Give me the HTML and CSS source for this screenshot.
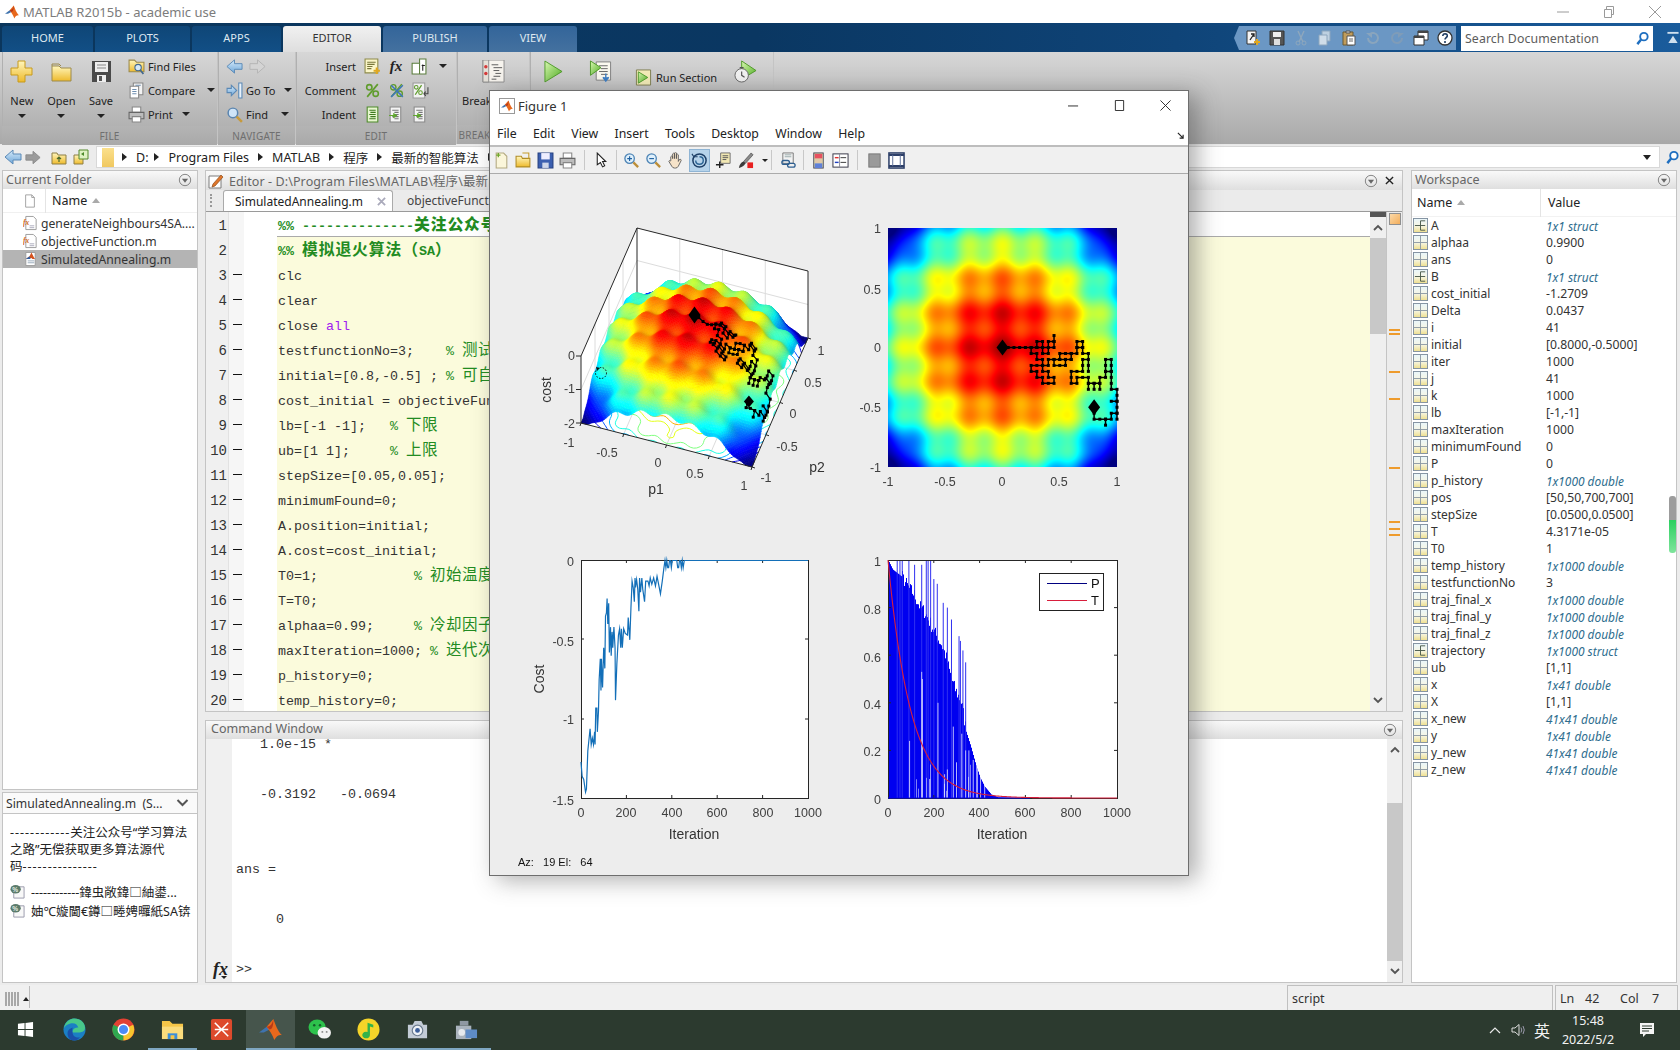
FILE: index.html
```html
<!DOCTYPE html>
<html lang="en">
<head>
<meta charset="utf-8">
<title>MATLAB R2015b - academic use</title>
<link rel="stylesheet" href="styles.css">
</head>
<body>
<svg class="defs" width="0" height="0" aria-hidden="true">
  <defs>
    <linearGradient id="gy" x1="0" y1="0" x2="0" y2="1"><stop offset="0" stop-color="#fff6bc"/><stop offset="1" stop-color="#eeba2c"/></linearGradient>
    <linearGradient id="gb" x1="0" y1="0" x2="0" y2="1"><stop offset="0" stop-color="#d8ecfb"/><stop offset="1" stop-color="#6ea6d8"/></linearGradient>
    <linearGradient id="gg" x1="0" y1="0" x2="1" y2="1"><stop offset="0" stop-color="#d8f7b0"/><stop offset="1" stop-color="#4fae22"/></linearGradient>
    <linearGradient id="gw" x1="0" y1="0" x2="0" y2="1"><stop offset="0" stop-color="#e9f6fb"/><stop offset=".5" stop-color="#f6f6e6"/><stop offset="1" stop-color="#efdf8c"/></linearGradient>
    <symbol id="s-mlogo" viewBox="0 0 24 24"><path fill="#3f73ae" d="M0 15 8 9l3 3-6 3z"/><path fill="#e8681c" d="M8 9 15 1c2 5 4 12 9 17-3-1-6 1-8 5-2-6-5-10-8-14z"/><path fill="#b93a18" d="M15 1c-1 5-3 8-7 8l3 3c3 0 4-4 4-11z"/></symbol>
    <symbol id="s-page" viewBox="0 0 16 16"><path d="M3 1h7l3 3v11H3z" fill="#fff" stroke="#9a9a9a"/><path d="M10 1v3h3" fill="none" stroke="#9a9a9a"/></symbol>
    <symbol id="s-lineg" viewBox="0 0 16 16"><path d="M3 1h10v14H3z" fill="#e7f6cf" stroke="#4e8c2b"/><path d="M5 4h6M6 6h5M5 8h6M6 10h5M5 12h6" stroke="#3d7a1e"/></symbol>
    <symbol id="s-findf" viewBox="0 0 16 16"><path d="M1 2h5l2 2h7v9H1z" fill="url(#gy)" stroke="#9c8a4c"/><circle cx="9.500" cy="9" r="3" fill="#d6e9f8" stroke="#41688f"/><path d="M11.600 11.200 14.500 15" stroke="#41688f" stroke-width="1.600"/></symbol>
    <symbol id="s-compare" viewBox="0 0 16 16"><path d="M5 1h9v11H5z" fill="#f3f3f3" stroke="#888"/><path d="M2 4h8v11H2z" fill="#fff" stroke="#888"/><path d="M4 7h4M4 9h4M4 11h4M7 3h5" stroke="#6f8fb0"/></symbol>
    <symbol id="s-print" viewBox="0 0 16 16"><path d="M4 1h8v5H4z" fill="#fff" stroke="#888"/><path d="M1 6h14v6H1z" fill="#bcbcbc" stroke="#666"/><path d="M4 10h8v5H4z" fill="#fff" stroke="#888"/></symbol>
    <symbol id="s-back" viewBox="0 0 18 16"><path d="M1 8 9 1v4h8v6H9v4z" fill="url(#gb)" stroke="#5a89b6"/></symbol>
    <symbol id="s-fwd" viewBox="0 0 18 16"><path d="M17 8 9 1v4H1v6h8v4z" fill="#d4d4d4" stroke="#b4b4b4"/></symbol>
    <symbol id="s-fwdg" viewBox="0 0 18 16"><path d="M17 8 9 1v4H1v6h8v4z" fill="#9b9b9b" stroke="#8a8a8a"/></symbol>
    <symbol id="s-goto" viewBox="0 0 16 16"><path d="M10 8 5 3v3H1v4h4v3z" fill="url(#gb)" stroke="#5a89b6"/><path d="M12 1h3v14h-3z" fill="#e8f2fb" stroke="#5a89b6"/></symbol>
    <symbol id="s-mag" viewBox="0 0 16 16"><circle cx="6.500" cy="6.500" r="4.500" fill="#cfe4f7" stroke="#5a85b0" stroke-width="1.400"/><path d="M10 10 15 15" stroke="#c79a3c" stroke-width="2.400"/></symbol>
    <symbol id="s-blue-mag" viewBox="0 0 16 16"><circle cx="9.500" cy="6" r="4" fill="#fff" stroke="#1f6fc0" stroke-width="2"/><path d="M6.500 9 2.500 14" stroke="#1f6fc0" stroke-width="2.600"/></symbol>
    <symbol id="s-insert" viewBox="0 0 16 16"><path d="M1 1h12v13H1z" fill="#fbf6c8" stroke="#8d8a4a"/><path d="M3 4h8M3 6h7M3 8h5M3 10h4" stroke="#77763a"/><path d="M12 9v6M9 12h6" stroke="#e0a820" stroke-width="2"/></symbol>
    <symbol id="s-func" viewBox="0 0 16 16"><path d="M2 5h7V1h6v14H2z" fill="#fff" stroke="#5a7d3c"/><path d="M9 5v10" stroke="#5a7d3c"/><path d="M11 7h3M12 6v6" stroke="#222"/></symbol>
    <symbol id="s-pct" viewBox="0 0 16 16"><path d="M13 2 3 14" stroke="#5f9c2c" stroke-width="1.600"/><circle cx="5" cy="5" r="2.500" fill="none" stroke="#5f9c2c" stroke-width="1.500"/><circle cx="11" cy="11" r="2.500" fill="none" stroke="#5f9c2c" stroke-width="1.500"/></symbol>
    <symbol id="s-pctx" viewBox="0 0 16 16"><path d="M13 2 3 14" stroke="#5f9c2c" stroke-width="1.400"/><circle cx="5" cy="5" r="2.500" fill="none" stroke="#5f9c2c" stroke-width="1.300"/><circle cx="11" cy="11" r="2.500" fill="none" stroke="#5f9c2c" stroke-width="1.300"/><path d="M3 3 14 14M14 3 3 14" stroke="#3d77b8" stroke-width="1.400"/></symbol>
    <symbol id="s-pctw" viewBox="0 0 16 16"><path d="M1 1h11v14H1z" fill="#f2f2f2" stroke="#9a9a9a"/><path d="M9 3 3 12" stroke="#5f9c2c" stroke-width="1.200"/><circle cx="4" cy="5" r="1.700" fill="none" stroke="#5f9c2c"/><circle cx="8" cy="10" r="1.700" fill="none" stroke="#5f9c2c"/><path d="M15 5v6h-4M11 11l2-2M11 11l2 2" fill="none" stroke="#444"/></symbol>
    <symbol id="s-indl" viewBox="0 0 16 16"><path d="M2 1h10v14H2z" fill="#f4f4f4" stroke="#8a8a8a"/><path d="M4 4h6M6 6h4M6 8h4M4 10h6M6 12h4" stroke="#777"/><path d="M1 9h6M5 7l3 2-3 2" fill="#5fa82c" stroke="#5fa82c"/></symbol>
    <symbol id="s-break" viewBox="0 0 24 24"><path d="M1 0h22v23H1z" fill="#f7f4ee" stroke="#8d8d8d"/><path d="M1 0h6v23H1z" fill="#e4e0d8" stroke="#8d8d8d"/><circle cx="4" cy="7" r="1.800" fill="#d43a3a"/><circle cx="4" cy="14" r="1.800" fill="#d43a3a"/><path d="M10 5h7M12 8h9M12 11h6M14 14h6M12 17h7M10 20h5" stroke="#5a5a5a"/></symbol>
    <symbol id="s-run" viewBox="0 0 20 24"><path d="M1 1 19 12 1 23z" fill="url(#gg)" stroke="#4f9a2a"/></symbol>
    <symbol id="s-radv" viewBox="0 0 24 24"><path d="M7 2h15v19H7z" fill="#fbf9ef" stroke="#808080"/><path d="M10 6h9M12 9h7M10 12h9M12 15h7" stroke="#666"/><path d="M1 1 12 8 1 16z" fill="url(#gg)" stroke="#4f9a2a"/><path d="M17 14v6M14 18l3 4 3-4" fill="#3d7ec4" stroke="#3d7ec4" stroke-width="1.400"/></symbol>
    <symbol id="s-rsec" viewBox="0 0 17 18"><path d="M1 1h15v16H1z" fill="#f4ecb8" stroke="#7d7d50"/><path d="M3 3 13 9 3 15z" fill="url(#gg)" stroke="#4f9a2a"/></symbol>
    <symbol id="s-timer" viewBox="0 0 24 24"><path d="M8 1 23 11 8 20z" fill="url(#gg)" stroke="#4f9a2a"/><circle cx="8" cy="16" r="7" fill="#f2f2f2" stroke="#666"/><path d="M8 12v4l3 2M6 8h4" fill="none" stroke="#555" stroke-width="1.200"/></symbol>
    <symbol id="s-edit" viewBox="0 0 16 16"><path d="M1 3h12v12H1z" fill="#fff" stroke="#7c7c7c"/><path d="M5 11 13 2l2 2-8 9-3 1z" fill="#e0762c" stroke="#8d4d18" stroke-width=".7"/></symbol>
    <symbol id="s-fx" viewBox="0 0 16 16"><path d="M3 1h8l3 3v11H3z" fill="#fff" stroke="#9a9a9a"/><text x="0" y="10" class="fxglyph">fx</text><path d="M7 11h5M7 13h5" stroke="#aab"/></symbol>
    <symbol id="s-scr" viewBox="0 0 16 16"><path d="M3 1h10v14H3z" fill="#fff" stroke="#9a9a9a"/><path d="M3 8 7 5l2-4 3 6 1 1-3 0-1-1z" fill="#d4521e"/><path d="M3 8 7 5l1 3z" fill="#2f5ea0"/><path d="M5 10h7M5 12h7" stroke="#9ab"/></symbol>
    <symbol id="s-grid" viewBox="0 0 16 16"><rect x=".5" y=".5" width="15" height="15" fill="url(#gw)" stroke="#7f8f9f"/><path d="M0 8h16M8 0v16" stroke="#8d9aa4"/></symbol>
    <symbol id="s-struct" viewBox="0 0 16 16"><rect x=".5" y=".5" width="15" height="15" fill="url(#gw)" stroke="#7f8f9f"/><path d="M8 3v10M8 3h5M8 8h5M8 13h5M2 8h6" fill="none" stroke="#4a5a4a"/></symbol>
    <symbol id="s-detail" viewBox="0 0 16 16"><path d="M4 3h11v12H4z" fill="#f8f8f8" stroke="#99a"/><ellipse cx="6" cy="5.500" rx="5.500" ry="4.500" fill="#5b7b6b"/><text x="2.400" y="8" class="pctglyph">%</text></symbol>
    <symbol id="s-up" viewBox="0 0 16 16"><path d="M1 4h5l1 2h8v9H1z" fill="url(#gy)" stroke="#8e7f45"/><path d="M8 13V8M6 10l2-2 2 2" fill="none" stroke="#4b6a2a" stroke-width="1.200"/></symbol>
    <symbol id="s-browse" viewBox="0 0 16 16"><path d="M1 6h9v9H1z" fill="url(#gy)" stroke="#8e7f45"/><path d="M6 1h9v9H6z" fill="#dff2c4" stroke="#548a2c"/><path d="M8 5l3-2v4z" fill="#4b8a2a"/></symbol>
    <symbol id="s-open" viewBox="0 0 16 16"><path d="M1 4h5l1 2h7v8H1z" fill="url(#gy)" stroke="#b08c26"/><path d="M7 1h6v5" fill="none" stroke="#c49b2c"/></symbol>
    <symbol id="s-disk" viewBox="0 0 16 16"><path d="M1 1h14v14H1z" fill="#3b5fb0" stroke="#223f80"/><path d="M4 1h8v6H4z" fill="#eef"/><path d="M5 10h6v5H5z" fill="#cdd6ea"/></symbol>
    <symbol id="s-arrowc" viewBox="0 0 12 16"><path d="M2 1v11l3-2 2 4 2-1-2-4h3z" fill="#fff" stroke="#222"/></symbol>
    <symbol id="s-zin" viewBox="0 0 18 18"><circle cx="7" cy="7" r="5" fill="#dff0fc" stroke="#4d84b5" stroke-width="1.400"/><path d="M4.500 7h5M7 4.500v5" stroke="#1d5fa0" stroke-width="1.200"/><path d="M11 11l5 5" stroke="#bc8e38" stroke-width="2.400"/></symbol>
    <symbol id="s-zout" viewBox="0 0 18 18"><circle cx="7" cy="7" r="5" fill="#dff0fc" stroke="#4d84b5" stroke-width="1.400"/><path d="M4.500 7h5" stroke="#1d5fa0" stroke-width="1.200"/><path d="M11 11l5 5" stroke="#bc8e38" stroke-width="2.400"/></symbol>
    <symbol id="s-pan" viewBox="0 0 18 18"><path d="M4 9V5q1-1.500 2 0v2-5q1-1.500 2 0v5-6q1-1.500 2 0v6-4q1-1.500 2 0v7l1-2q2-1 2 1l-3 6q-1 2-3 2H8q-2 0-3-2l-3-5q0-1.500 2-.5z" fill="#f6e3c9" stroke="#555" stroke-width=".9"/></symbol>
    <symbol id="s-rot" viewBox="0 0 18 18"><circle cx="9" cy="9" r="7" fill="none" stroke="#1d3f66" stroke-width="1.600"/><path d="M3 5l-2-3M3 5l4 0" stroke="#1d3f66" stroke-width="1.200"/><path d="M9 5q4 0 4 4t-4 4-4-4" fill="none" stroke="#2e6696" stroke-width="1.500"/></symbol>
    <symbol id="s-cursor" viewBox="0 0 18 18"><path d="M6 1h10v11H6z" fill="#f3e9b4" stroke="#6d6d6d"/><path d="M8 4h6M8 6h6M8 8h4" stroke="#555"/><path d="M5 10v7M1 13.500h8" stroke="#222" stroke-width="1.500"/></symbol>
    <symbol id="s-brush" viewBox="0 0 18 18"><path d="M15 1 7 10l2 2 8-9z" fill="#8b8b8b" stroke="#444" stroke-width=".7"/><path d="M7 10q-4 1-5 7 5-1 7-5z" fill="#3b3b3b"/><rect x="11" y="11" width="6" height="6" fill="#e82020"/></symbol>
    <symbol id="s-link" viewBox="0 0 18 18"><path d="M3 1h11v11H3z" fill="#f3f3f3" stroke="#777"/><path d="M5 3h7M5 5h7" stroke="#9aa"/><rect x="2" y="9" width="8" height="4" rx="2" fill="none" stroke="#2e5f90" stroke-width="1.400"/><rect x="8" y="12" width="8" height="4" rx="2" fill="none" stroke="#2e5f90" stroke-width="1.400"/></symbol>
    <symbol id="s-cbar" viewBox="0 0 12 18"><rect x="1" y="1" width="10" height="16" fill="#dda" stroke="#445"/><rect x="2" y="2" width="8" height="5" fill="#e85060"/><rect x="2" y="7" width="8" height="5" fill="#e0c8a8"/><rect x="2" y="12" width="8" height="5" fill="#6080d8"/></symbol>
    <symbol id="s-legend" viewBox="0 0 18 18"><rect x="1" y="2" width="16" height="14" fill="#fff" stroke="#334"/><path d="M3 6h4" stroke="#e03030" stroke-width="1.500"/><path d="M3 11h4" stroke="#2040c0" stroke-width="1.500"/><path d="M9 6h6M9 11h6" stroke="#333"/><path d="M8 2v14" stroke="#889"/></symbol>
    <symbol id="s-hide" viewBox="0 0 14 18"><rect x="1" y="2" width="12" height="14" fill="#9a9a9a" stroke="#777"/></symbol>
    <symbol id="s-tools" viewBox="0 0 18 18"><rect x="1" y="1" width="16" height="16" fill="#fff" stroke="#2d3f68" stroke-width="1.600"/><path d="M1 3h16M1 15h16" stroke="#2d3f68" stroke-width="2.500"/><path d="M5 3v12M13 3v12" stroke="#5d6f98"/></symbol>
    <symbol id="s-tb-new" viewBox="0 0 16 16"><path d="M3 1h7l3 3v11H3z" fill="#fbf6da" stroke="#b3a980"/><path d="M5 1v4M3 3h4" stroke="#6da52b" stroke-width="1.200"/></symbol>
    <symbol id="s-tb-save" viewBox="0 0 16 16"><path d="M1 1h14v14H1z" fill="#555" stroke="#333"/><path d="M4 2h8v5H4z" fill="#eee"/><path d="M5 9h6v6H5z" fill="#ddd"/></symbol>
    <symbol id="s-cut" viewBox="0 0 16 16"><path d="M11 1 6 12M5 1l5 11" stroke="#8ea7bd" stroke-width="1.400"/><circle cx="5" cy="13" r="2" fill="none" stroke="#8ea7bd"/><circle cx="11" cy="13" r="2" fill="none" stroke="#8ea7bd"/></symbol>
    <symbol id="s-copy" viewBox="0 0 16 16"><path d="M5 1h8v10H5z" fill="#bdd0e0" stroke="#8da6bd"/><path d="M2 5h8v10H2z" fill="#cfdde9" stroke="#8da6bd"/></symbol>
    <symbol id="s-paste" viewBox="0 0 16 16"><path d="M2 2h10v13H2z" fill="#c09c5c" stroke="#6d5a30"/><path d="M6 6h8v9H6z" fill="#fff" stroke="#555"/><path d="M5 1h4v2H5z" fill="#ddd" stroke="#555"/><path d="M8 9h4M8 11h4" stroke="#666"/></symbol>
    <symbol id="s-undo" viewBox="0 0 16 16"><path d="M3 8a5 5 0 1 0 2-4" fill="none" stroke="#8aa5bd" stroke-width="2"/><path d="M1 3h6v5z" fill="#8aa5bd"/></symbol>
    <symbol id="s-redo" viewBox="0 0 16 16"><path d="M13 8a5 5 0 1 1-2-4" fill="none" stroke="#7f9cb8" stroke-width="2"/><path d="M15 3H9v5z" fill="#7f9cb8"/></symbol>
    <symbol id="s-wins" viewBox="0 0 16 16"><path d="M5 1h10v9H5z" fill="#fff" stroke="#333"/><path d="M5 1h10v2H5z" fill="#444"/><path d="M1 6h10v9H1z" fill="#fff" stroke="#333"/><path d="M1 6h10v2H1z" fill="#444"/></symbol>
    <symbol id="s-help" viewBox="0 0 16 16"><circle cx="8" cy="8" r="7" fill="#fff" stroke="#333" stroke-width="1.300"/><path d="M5.800 6q.2-2.200 2.300-2.200 2.300.1 2.200 2.100c-.1 1.700-2.300 1.700-2.300 3.500M8 11v2" fill="none" stroke="#1f3d63" stroke-width="1.600"/></symbol>
    <symbol id="s-short" viewBox="0 0 16 16"><path d="M2 1h9v13H2z" fill="#f4f4f4" stroke="#333"/><path d="M5 10 9 4M6 4h3v3" fill="none" stroke="#222" stroke-width="1.300"/><path d="M12 9v6M9 12h6" stroke="#e0a820" stroke-width="2"/></symbol>
    <symbol id="s-dropc" viewBox="0 0 16 16"><circle cx="8" cy="8" r="6.500" fill="none" stroke="#777"/><path d="M4.500 6.500h7L8 11z" fill="#666"/></symbol>
  </defs>
</svg>

<div class="app">
  <header class="titlebar">
    <svg class="ic-title"><use href="#s-mlogo"/></svg>
    <span class="title-text">MATLAB R2015b - academic use</span>
    <div class="winctl">
      <svg class="wc" viewBox="0 0 12 12"><path d="M0 6h12" stroke="#9a9a9a"/></svg>
      <svg class="wc" viewBox="0 0 12 12"><path d="M1.500 3.500h7v8h-7zM3.500 3.500v-3h7v8h-2" fill="none" stroke="#9a9a9a"/></svg>
      <svg class="wc" viewBox="0 0 12 12"><path d="M0 0l12 12M12 0 0 12" stroke="#9a9a9a"/></svg>
    </div>
  </header>

  <nav class="tabstrip">
    <span class="tab t-dark t-home">HOME</span>
    <span class="tab t-dark t-plots">PLOTS</span>
    <span class="tab t-dark t-apps">APPS</span>
    <span class="tab t-active t-editor">EDITOR</span>
    <span class="tab t-light t-publish">PUBLISH</span>
    <span class="tab t-light t-view">VIEW</span>
    <div class="quick">
      <svg class="qi"><use href="#s-short"/></svg>
      <svg class="qi"><use href="#s-tb-save"/></svg>
      <svg class="qi"><use href="#s-cut"/></svg>
      <svg class="qi"><use href="#s-copy"/></svg>
      <svg class="qi"><use href="#s-paste"/></svg>
      <svg class="qi"><use href="#s-undo"/></svg>
      <svg class="qi"><use href="#s-redo"/></svg>
      <svg class="qi"><use href="#s-wins"/></svg>
      <svg class="qi"><use href="#s-help"/></svg>
    </div>
    <div class="docsearch">
      <span>Search Documentation</span>
      <svg class="ds-ic"><use href="#s-blue-mag"/></svg>
    </div>
    <svg class="collapse" viewBox="0 0 12 14"><path d="M0 1h12v2H0z" fill="#cfe0ee"/><path d="M6 5l5 8H1z" fill="#cfe0ee"/></svg>
  </nav>

  <section class="ribbon">
    <div class="rsec r-file">
      <div class="rbody">
        <div class="bigbtn">
          <svg class="big" viewBox="0 0 23 23"><path d="M8 1h7v7h7v7h-7v7H8v-7H1V8h7z" fill="url(#gy)" stroke="#c79a1c"/></svg>
          <span>New</span><i class="caret"></i>
        </div>
        <div class="bigbtn">
          <svg class="big" viewBox="0 0 23 23"><path d="M2 6h7l2 2h10v13H2z" fill="url(#gy)" stroke="#9c8a4c"/><path d="M2 6V4h7l2 2" fill="none" stroke="#9c8a4c"/></svg>
          <span>Open</span><i class="caret"></i>
        </div>
        <div class="bigbtn">
          <svg class="big" viewBox="0 0 23 23"><path d="M2 1h19v21H2z" fill="#4a4a4a"/><path d="M5 2h13v10H5z" fill="#eee"/><path d="M7 5h9M7 8h9" stroke="#888"/><path d="M7 15h9v7H7z" fill="#eee"/><path d="M9 16h3v5H9z" fill="#555"/></svg>
          <span>Save</span><i class="caret"></i>
        </div>
        <div class="smallcol">
          <div class="srow"><svg class="sic"><use href="#s-findf"/></svg><span>Find Files</span></div>
          <div class="srow"><svg class="sic"><use href="#s-compare"/></svg><span>Compare</span><i class="caret sc-cmp"></i></div>
          <div class="srow"><svg class="sic"><use href="#s-print"/></svg><span>Print</span><i class="caret sc-prn"></i></div>
        </div>
      </div>
      <div class="rlabel">FILE</div>
    </div>
    <div class="rsec r-nav">
      <div class="rbody">
        <div class="smallcol">
          <div class="srow"><svg class="sic"><use href="#s-back"/></svg><svg class="sic sic2"><use href="#s-fwd"/></svg></div>
          <div class="srow"><svg class="sic"><use href="#s-goto"/></svg><span>Go To</span><i class="caret sc2"></i></div>
          <div class="srow"><svg class="sic"><use href="#s-mag"/></svg><span>Find</span><i class="caret sc-find"></i></div>
        </div>
      </div>
      <div class="rlabel">NAVIGATE</div>
    </div>
    <div class="rsec r-edit">
      <div class="rbody">
        <div class="smallcol">
          <div class="srow erow"><span class="elabel">Insert</span><svg class="sic"><use href="#s-insert"/></svg><b class="fxbtn">fx</b><svg class="sic"><use href="#s-func"/></svg><i class="caret sc3"></i></div>
          <div class="srow erow"><span class="elabel">Comment</span><svg class="sic"><use href="#s-pct"/></svg><svg class="sic ei"><use href="#s-pctx"/></svg><svg class="sic ei"><use href="#s-pctw"/></svg></div>
          <div class="srow erow"><span class="elabel">Indent</span><svg class="sic"><use href="#s-lineg"/></svg><svg class="sic ei"><use href="#s-indl"/></svg><svg class="sic ei"><use href="#s-indl"/></svg></div>
        </div>
      </div>
      <div class="rlabel">EDIT</div>
    </div>
    <div class="rsec r-break">
      <div class="rbody">
        <div class="bigbtn wide"><svg class="big"><use href="#s-break"/></svg><span>Breakpoints</span><i class="caret"></i></div>
      </div>
      <div class="rlabel">BREAKPOINTS</div>
    </div>
    <div class="rsec r-run">
      <div class="rbody runrow">
        <svg class="big ru1"><use href="#s-run"/></svg>
        <svg class="big ru2"><use href="#s-radv"/></svg>
        <div class="rsecbtn"><svg class="sic"><use href="#s-rsec"/></svg><span>Run Section</span></div>
        <svg class="big ru3"><use href="#s-timer"/></svg>
      </div>
      <div class="rlabel">RUN</div>
    </div>
  </section>

  <div class="pathbar">
    <svg class="p1"><use href="#s-back"/></svg>
    <svg class="p2"><use href="#s-fwdg"/></svg>
    <svg class="p3"><use href="#s-up"/></svg>
    <svg class="p4"><use href="#s-browse"/></svg>
    <div class="pathbox">
      <i class="folderchip"></i>
      <span class="crumbs">
        <i class="tri"></i><span>D:</span><i class="tri"></i><span>Program Files</span><i class="tri"></i><span>MATLAB</span><i class="tri"></i><span>程序</span><i class="tri"></i><span>最新的智能算法</span><i class="tri"></i>
      </span>
      <i class="pdown"></i>
    </div>
    <svg class="p5"><use href="#s-blue-mag"/></svg>
  </div>

  <main class="main">
    <div class="leftcol">
      <section class="panel folder">
        <div class="phead"><span>Current Folder</span><svg class="dropc"><use href="#s-dropc"/></svg></div>
        <div class="fhead"><svg class="fh-ic"><use href="#s-page"/></svg><span class="fh-name">Name</span><i class="sortup"></i></div>
        <div class="frow"><svg class="fic"><use href="#s-fx"/></svg><span>generateNeighbours4SA....</span></div>
        <div class="frow"><svg class="fic"><use href="#s-fx"/></svg><span>objectiveFunction.m</span></div>
        <div class="frow sel"><svg class="fic"><use href="#s-scr"/></svg><span>SimulatedAnnealing.m</span></div>
      </section>
      <section class="panel details">
        <div class="dhead"><span>SimulatedAnnealing.m &nbsp;(S...</span><svg class="chev" viewBox="0 0 12 8"><path d="M1 1l5 5 5-5" fill="none" stroke="#555" stroke-width="2"/></svg></div>
        <p class="dtext"><span class="dd">------------</span>关注公众号“学习算法<br>之路”无偿获取更多算法源代<br>码<span class="dd">---------------</span></p>
        <div class="ditem"><svg class="dic"><use href="#s-detail"/></svg><span>------------鍏虫敞鍏□紬鍙...</span></div>
        <div class="ditem"><svg class="dic"><use href="#s-detail"/></svg><span>妯℃嫙閫€鐏□畻娉曪紙SA锛</span></div>
      </section>
    </div>

    <div class="centercol">
      <section class="panel editor">
        <div class="phead ehead">
          <svg class="eic"><use href="#s-edit"/></svg>
          <span>Editor - D:\Program Files\MATLAB\程序\最新的智能算法\SimulatedAnnealing.m</span>
          <svg class="dropc eright"><use href="#s-dropc"/></svg>
          <svg class="xic" viewBox="0 0 10 10"><path d="M1 1l8 8M9 1 1 9" stroke="#222" stroke-width="1.500"/></svg>
        </div>
        <div class="etabs">
          <i class="grip"></i>
          <span class="etab on">SimulatedAnnealing.m<svg class="tabx" viewBox="0 0 10 10"><path d="M1 1l8 8M9 1 1 9" stroke="#aab" stroke-width="2"/></svg></span>
          <span class="etab">objectiveFunction.m</span>
        </div>
        <div class="ebody">
          <div class="lines">
            <div class="line first"><span class="ln">1</span><span class="dc"></span><span class="gp"></span><span class="code cell"><b>%% --------------<span class="cj">关注公众号“学习算法之路”无偿获取更多算法源代码</span>---------------</b></span></div>
            <div class="line"><span class="ln">2</span><span class="dc"></span><span class="gp"></span><span class="code"><b class="cell">%% <span class="cj">模拟退火算法（</span>SA<span class="cj">）</span></b></span></div>
            <div class="line"><span class="ln">3</span><span class="dc"><i></i></span><span class="gp"></span><span class="code">clc</span></div>
            <div class="line"><span class="ln">4</span><span class="dc"><i></i></span><span class="gp"></span><span class="code">clear</span></div>
            <div class="line"><span class="ln">5</span><span class="dc"><i></i></span><span class="gp"></span><span class="code">close <span class="kw">all</span></span></div>
            <div class="line"><span class="ln">6</span><span class="dc"><i></i></span><span class="gp"></span><span class="code">testfunctionNo=3;    <span class="cm">% <span class="cj">测试函数编号</span></span></span></div>
            <div class="line"><span class="ln">7</span><span class="dc"><i></i></span><span class="gp"></span><span class="code">initial=[0.8,-0.5] ; <span class="cm">% <span class="cj">可自定义初始位置</span></span></span></div>
            <div class="line"><span class="ln">8</span><span class="dc"><i></i></span><span class="gp"></span><span class="code">cost_initial = objectiveFunction(initial,testfunctionNo);</span></div>
            <div class="line"><span class="ln">9</span><span class="dc"><i></i></span><span class="gp"></span><span class="code">lb=[-1 -1];   <span class="cm">% <span class="cj">下限</span></span></span></div>
            <div class="line"><span class="ln">10</span><span class="dc"><i></i></span><span class="gp"></span><span class="code">ub=[1 1];     <span class="cm">% <span class="cj">上限</span></span></span></div>
            <div class="line"><span class="ln">11</span><span class="dc"><i></i></span><span class="gp"></span><span class="code">stepSize=[0.05,0.05];</span></div>
            <div class="line"><span class="ln">12</span><span class="dc"><i></i></span><span class="gp"></span><span class="code">minimumFound=0;</span></div>
            <div class="line"><span class="ln">13</span><span class="dc"><i></i></span><span class="gp"></span><span class="code">A.position=initial;</span></div>
            <div class="line"><span class="ln">14</span><span class="dc"><i></i></span><span class="gp"></span><span class="code">A.cost=cost_initial;</span></div>
            <div class="line"><span class="ln">15</span><span class="dc"><i></i></span><span class="gp"></span><span class="code">T0=1;            <span class="cm">% <span class="cj">初始温度</span></span></span></div>
            <div class="line"><span class="ln">16</span><span class="dc"><i></i></span><span class="gp"></span><span class="code">T=T0;</span></div>
            <div class="line"><span class="ln">17</span><span class="dc"><i></i></span><span class="gp"></span><span class="code">alphaa=0.99;     <span class="cm">% <span class="cj">冷却因子</span></span></span></div>
            <div class="line"><span class="ln">18</span><span class="dc"><i></i></span><span class="gp"></span><span class="code">maxIteration=1000; <span class="cm">% <span class="cj">迭代次数</span></span></span></div>
            <div class="line"><span class="ln">19</span><span class="dc"><i></i></span><span class="gp"></span><span class="code">p_history=0;</span></div>
            <div class="line"><span class="ln">20</span><span class="dc"><i></i></span><span class="gp"></span><span class="code">temp_history=0;</span></div>
          </div>
          <div class="vscroll es">
            <i class="es-top"></i>
            <svg class="chevs" viewBox="0 0 10 7"><path d="M1 6l4-4 4 4" fill="none" stroke="#555" stroke-width="1.800"/></svg>
            <i class="thumb"></i>
            <svg class="chevs botm" viewBox="0 0 10 7"><path d="M1 1l4 4 4-4" fill="none" stroke="#555" stroke-width="1.800"/></svg>
          </div>
          <div class="markstrip">
            <i class="okbox"></i>
            <i class="mk m1"></i><i class="mk m2"></i><i class="mk m3"></i><i class="mk m4"></i><i class="mk m5"></i><i class="mk m6"></i><i class="mk m7"></i><i class="mk m8"></i>
          </div>
        </div>
      </section>
      <section class="panel cmd">
        <div class="phead chead"><span>Command Window</span><svg class="dropc"><use href="#s-dropc"/></svg></div>
        <div class="cbody">
          <div class="cgut"><span class="fxprompt">fx</span><i class="fxcaret"></i></div>
          <div class="cout">
            <div class="cl">   1.0e-15 *</div>
            <div class="cl"> </div>
            <div class="cl">   -0.3192   -0.0694</div>
            <div class="cl"> </div>
            <div class="cl"> </div>
            <div class="cl">ans =</div>
            <div class="cl"> </div>
            <div class="cl">     0</div>
            <div class="cl"> </div>
            <div class="cl">&gt;&gt;</div>
          </div>
          <div class="vscroll cs">
            <svg class="chevs" viewBox="0 0 10 7"><path d="M1 6l4-4 4 4" fill="none" stroke="#555" stroke-width="1.800"/></svg>
            <i class="cthumb"></i>
            <svg class="chevs" viewBox="0 0 10 7"><path d="M1 1l4 4 4-4" fill="none" stroke="#555" stroke-width="1.800"/></svg>
          </div>
        </div>
      </section>
    </div>

    <section class="panel workspace">
      <div class="phead"><span>Workspace</span><svg class="dropc"><use href="#s-dropc"/></svg></div>
      <div class="whead"><span class="wh-name">Name</span><i class="sortup"></i><span class="wh-val">Value</span></div>
      <div class="wrows">
        <div class="wr"><svg class="wi"><use href="#s-struct"/></svg><span class="wn">A</span><span class="wv it">1x1 struct</span></div>
        <div class="wr"><svg class="wi"><use href="#s-grid"/></svg><span class="wn">alphaa</span><span class="wv">0.9900</span></div>
        <div class="wr"><svg class="wi"><use href="#s-grid"/></svg><span class="wn">ans</span><span class="wv">0</span></div>
        <div class="wr"><svg class="wi"><use href="#s-struct"/></svg><span class="wn">B</span><span class="wv it">1x1 struct</span></div>
        <div class="wr"><svg class="wi"><use href="#s-grid"/></svg><span class="wn">cost_initial</span><span class="wv">-1.2709</span></div>
        <div class="wr"><svg class="wi"><use href="#s-grid"/></svg><span class="wn">Delta</span><span class="wv">0.0437</span></div>
        <div class="wr"><svg class="wi"><use href="#s-grid"/></svg><span class="wn">i</span><span class="wv">41</span></div>
        <div class="wr"><svg class="wi"><use href="#s-grid"/></svg><span class="wn">initial</span><span class="wv">[0.8000,-0.5000]</span></div>
        <div class="wr"><svg class="wi"><use href="#s-grid"/></svg><span class="wn">iter</span><span class="wv">1000</span></div>
        <div class="wr"><svg class="wi"><use href="#s-grid"/></svg><span class="wn">j</span><span class="wv">41</span></div>
        <div class="wr"><svg class="wi"><use href="#s-grid"/></svg><span class="wn">k</span><span class="wv">1000</span></div>
        <div class="wr"><svg class="wi"><use href="#s-grid"/></svg><span class="wn">lb</span><span class="wv">[-1,-1]</span></div>
        <div class="wr"><svg class="wi"><use href="#s-grid"/></svg><span class="wn">maxIteration</span><span class="wv">1000</span></div>
        <div class="wr"><svg class="wi"><use href="#s-grid"/></svg><span class="wn">minimumFound</span><span class="wv">0</span></div>
        <div class="wr"><svg class="wi"><use href="#s-grid"/></svg><span class="wn">P</span><span class="wv">0</span></div>
        <div class="wr"><svg class="wi"><use href="#s-grid"/></svg><span class="wn">p_history</span><span class="wv it">1x1000 double</span></div>
        <div class="wr"><svg class="wi"><use href="#s-grid"/></svg><span class="wn">pos</span><span class="wv">[50,50,700,700]</span></div>
        <div class="wr"><svg class="wi"><use href="#s-grid"/></svg><span class="wn">stepSize</span><span class="wv">[0.0500,0.0500]</span></div>
        <div class="wr"><svg class="wi"><use href="#s-grid"/></svg><span class="wn">T</span><span class="wv">4.3171e-05</span></div>
        <div class="wr"><svg class="wi"><use href="#s-grid"/></svg><span class="wn">T0</span><span class="wv">1</span></div>
        <div class="wr"><svg class="wi"><use href="#s-grid"/></svg><span class="wn">temp_history</span><span class="wv it">1x1000 double</span></div>
        <div class="wr"><svg class="wi"><use href="#s-grid"/></svg><span class="wn">testfunctionNo</span><span class="wv">3</span></div>
        <div class="wr"><svg class="wi"><use href="#s-grid"/></svg><span class="wn">traj_final_x</span><span class="wv it">1x1000 double</span></div>
        <div class="wr"><svg class="wi"><use href="#s-grid"/></svg><span class="wn">traj_final_y</span><span class="wv it">1x1000 double</span></div>
        <div class="wr"><svg class="wi"><use href="#s-grid"/></svg><span class="wn">traj_final_z</span><span class="wv it">1x1000 double</span></div>
        <div class="wr"><svg class="wi"><use href="#s-struct"/></svg><span class="wn">trajectory</span><span class="wv it">1x1000 struct</span></div>
        <div class="wr"><svg class="wi"><use href="#s-grid"/></svg><span class="wn">ub</span><span class="wv">[1,1]</span></div>
        <div class="wr"><svg class="wi"><use href="#s-grid"/></svg><span class="wn">x</span><span class="wv it">1x41 double</span></div>
        <div class="wr"><svg class="wi"><use href="#s-grid"/></svg><span class="wn">X</span><span class="wv">[1,1]</span></div>
        <div class="wr"><svg class="wi"><use href="#s-grid"/></svg><span class="wn">x_new</span><span class="wv it">41x41 double</span></div>
        <div class="wr"><svg class="wi"><use href="#s-grid"/></svg><span class="wn">y</span><span class="wv it">1x41 double</span></div>
        <div class="wr"><svg class="wi"><use href="#s-grid"/></svg><span class="wn">y_new</span><span class="wv it">41x41 double</span></div>
        <div class="wr"><svg class="wi"><use href="#s-grid"/></svg><span class="wn">z_new</span><span class="wv it">41x41 double</span></div>
      </div>
      <i class="greenbar"></i>
    </section>
  </main>

  <footer class="statusbar">
    <div class="grip2"><i></i><i></i><i></i><i></i><i></i><b></b></div>
    <div class="stat s-script">script</div>
    <div class="stat s-pos"><span>Ln</span><span>42</span><span>Col</span><span>7</span></div>
  </footer>

  <div class="taskbar">
    <div class="tb"><svg class="ti" viewBox="0 0 18 18"><path d="M1 3l7-1v6.500H1zM9 2l8-1v7.500H9zM1 9.500h7V16l-7-1zM9 9.500h8V17l-8-1z" fill="#fff"/></svg></div>
    <div class="tb"><svg class="ti lg" viewBox="0 0 24 24"><circle cx="12" cy="12" r="11.500" fill="#1b7fc4"/><path d="M1 11C2 3 8 .5 12 .5c6 0 11 4 11 10 0 3-3 4.500-5.500 4.500H10c0-4 3-5 6-5-1-3-3-4.500-6-4.500C6 5.500 2 8 1 11z" fill="#48c78a"/><path d="M10 15c0 4 4 6 8 5-2 2-4 3.500-6.500 3.500C6 23.500 4 18 5 14c1-2 3-3 5-4 0 2-1 3 0 5z" fill="#1a4fa8"/></svg></div>
    <div class="tb"><svg class="ti lg" viewBox="0 0 24 24"><circle cx="12" cy="12" r="11.500" fill="#e34133"/><path d="M12 12 1.500 7A11.500 11.500 0 0 0 12 23.500z" fill="#2fa84f"/><path d="M12 12v11.500A11.500 11.500 0 0 0 22 7z" fill="#f7c52d"/><circle cx="12" cy="12" r="5.500" fill="#4b8bf5" stroke="#fff" stroke-width="1.500"/></svg></div>
    <div class="tb"><svg class="ti lg" viewBox="0 0 24 24"><path d="M1 3h8l3 3h11v16H1z" fill="#f6c648"/><path d="M1 9h22v13H1z" fill="#fbdc7c"/><path d="M7 16h10v6H7z" fill="#3d8fd8"/><path d="M10 18h4v4h-4z" fill="#f6c648"/></svg></div>
    <div class="tb"><svg class="ti lg" viewBox="0 0 24 24"><rect x="1" y="1" width="22" height="22" rx="2" fill="#dd4a2c"/><path d="M5 5l14 14M19 5 5 19M5 12h14" stroke="#fff" stroke-width="1.600"/></svg></div>
    <div class="tb tactive"><svg class="ti lg"><use href="#s-mlogo"/></svg></div>
    <div class="tb"><svg class="ti lg" viewBox="0 0 24 24"><ellipse cx="9.500" cy="9.500" rx="9" ry="8" fill="#2dc24c"/><ellipse cx="17" cy="15.500" rx="7" ry="6" fill="#f2f2f2"/><circle cx="6.500" cy="7.500" r="1.300" fill="#14602a"/><circle cx="12.500" cy="7.500" r="1.300" fill="#14602a"/><circle cx="15" cy="14.500" r="1" fill="#888"/><circle cx="19.500" cy="14.500" r="1" fill="#888"/></svg></div>
    <div class="tb"><svg class="ti lg" viewBox="0 0 24 24"><circle cx="12" cy="12" r="11.500" fill="#f5d429"/><path d="M11 5l6 2v3l-3.500-1.200v8.700a4 3.500 0 1 1-2.500-3z" fill="#33b24a"/></svg></div>
    <div class="tb"><svg class="ti lg" viewBox="0 0 24 24"><path d="M2 7h5l2-4h7l2 4h4v14H2z" fill="#c3ccd6"/><circle cx="12" cy="13" r="5.500" fill="#eef2f6" stroke="#6d7d90" stroke-width="1.200"/><circle cx="12" cy="13" r="2.500" fill="#3c5f9a"/></svg></div>
    <div class="tb"><svg class="ti lg" viewBox="0 0 24 24"><path d="M1 8h16v14H1z" fill="#aab3bd"/><path d="M5 3h9v5H5z" fill="#8f98a2"/><rect x="11" y="12" width="12" height="9" fill="#5e8cc7"/><circle cx="7" cy="15" r="3.500" fill="#e6eaee"/></svg></div>
    <div class="tray">
      <svg class="tr-up" viewBox="0 0 12 8"><path d="M1 7l5-5 5 5" fill="none" stroke="#e8e8e8" stroke-width="1.200"/></svg>
      <svg class="tr-sp" viewBox="0 0 16 14"><path d="M1 5h3l4-3.500v11L4 9H1z" fill="none" stroke="#ddd"/><path d="M10 4.500q1.500 2.500 0 5M12 3q2.500 4 0 8" fill="none" stroke="#99a"/></svg>
      <span class="tr-ime">英</span>
      <div class="tr-time"><span>15:48</span><span>2022/5/2</span></div>
      <svg class="tr-note" viewBox="0 0 16 16"><path d="M1 1h14v11H7l-3 3v-3H1z" fill="#f4f4f4"/><path d="M3 4h10M3 6.500h10M3 9h7" stroke="#2c3a2e"/></svg>
    </div>
  </div>
</div>

<div class="figure">
  <div class="fig-title">
    <svg class="fig-logo" viewBox="0 0 16 16"><rect x=".5" y=".5" width="15" height="15" fill="#fff" stroke="#999"/><g transform="translate(2 2) scale(.5)"><use href="#s-mlogo" width="24" height="24"/></g></svg>
    <span class="fig-name">Figure 1</span>
    <div class="fig-ctl">
      <svg class="fc" viewBox="0 0 12 12"><path d="M0 6.500h11" stroke="#222"/></svg>
      <svg class="fc" viewBox="0 0 12 12"><path d="M1.500 .5h9v11h-9z" fill="none" stroke="#222"/></svg>
      <svg class="fc" viewBox="0 0 12 12"><path d="M.5.500l11 11M11.500.500l-11 11" stroke="#222"/></svg>
    </div>
  </div>
  <div class="fig-menu">
    <span>File</span><span>Edit</span><span>View</span><span>Insert</span><span>Tools</span><span>Desktop</span><span>Window</span><span>Help</span>
    <svg class="fig-dock" viewBox="0 0 8 8"><path d="M1 1l6 6M7 3v4H3" fill="none" stroke="#222" stroke-width="1.300"/></svg>
  </div>
  <div class="fig-tools">
    <svg class="ft f1"><use href="#s-tb-new"/></svg>
    <svg class="ft"><use href="#s-open"/></svg>
    <svg class="ft"><use href="#s-disk"/></svg>
    <svg class="ft"><use href="#s-print"/></svg>
    <i class="sep"></i>
    <svg class="ft"><use href="#s-arrowc"/></svg>
    <i class="sep tight"></i>
    <svg class="ft"><use href="#s-zin"/></svg>
    <svg class="ft"><use href="#s-zout"/></svg>
    <svg class="ft"><use href="#s-pan"/></svg>
    <span class="ft-on"><svg class="ft"><use href="#s-rot"/></svg></span>
    <svg class="ft"><use href="#s-cursor"/></svg>
    <svg class="ft"><use href="#s-brush"/></svg>
    <i class="caret ftc"></i>
    <i class="sep"></i>
    <svg class="ft"><use href="#s-link"/></svg>
    <i class="sep tight"></i>
    <svg class="ft"><use href="#s-cbar"/></svg>
    <svg class="ft"><use href="#s-legend"/></svg>
    <i class="sep"></i>
    <svg class="ft"><use href="#s-hide"/></svg>
    <svg class="ft"><use href="#s-tools"/></svg>
  </div>
  <div class="fig-plots">
    <canvas id="plots" class="plots-canvas" width="698" height="702"></canvas>
    <svg class="plots-text" viewBox="490 174 698 702">
      <g class="tick">
        <text x="575" y="360" class="e">0</text><text x="575" y="393" class="e">-1</text><text x="575" y="428" class="e">-2</text>
        <text x="569" y="447" class="m">-1</text><text x="607" y="457" class="m">-0.5</text><text x="658" y="467" class="m">0</text><text x="695" y="478" class="m">0.5</text><text x="744" y="490" class="m">1</text>
        <text x="821" y="355" class="m">1</text><text x="813" y="387" class="m">0.5</text><text x="793" y="418" class="m">0</text><text x="787" y="451" class="m">-0.5</text><text x="766" y="482" class="m">-1</text>

        <text x="881" y="233" class="e">1</text><text x="881" y="294" class="e">0.5</text><text x="881" y="352" class="e">0</text><text x="881" y="412" class="e">-0.5</text><text x="881" y="472" class="e">-1</text>
        <text x="888" y="486" class="m">-1</text><text x="945" y="486" class="m">-0.5</text><text x="1002" y="486" class="m">0</text><text x="1059" y="486" class="m">0.5</text><text x="1117" y="486" class="m">1</text>

        <text x="574" y="566" class="e">0</text><text x="574" y="646" class="e">-0.5</text><text x="574" y="724" class="e">-1</text><text x="574" y="805" class="e">-1.5</text>
        <text x="581" y="817" class="m">0</text><text x="626" y="817" class="m">200</text><text x="672" y="817" class="m">400</text><text x="717" y="817" class="m">600</text><text x="763" y="817" class="m">800</text><text x="808" y="817" class="m">1000</text>

        <text x="881" y="566" class="e">1</text><text x="881" y="614" class="e">0.8</text><text x="881" y="662" class="e">0.6</text><text x="881" y="709" class="e">0.4</text><text x="881" y="756" class="e">0.2</text><text x="881" y="804" class="e">0</text>
        <text x="888" y="817" class="m">0</text><text x="934" y="817" class="m">200</text><text x="979" y="817" class="m">400</text><text x="1025" y="817" class="m">600</text><text x="1071" y="817" class="m">800</text><text x="1117" y="817" class="m">1000</text>
      </g>
      <g class="alabel">
        <text x="656" y="494" class="m">p1</text>
        <text x="817" y="472" class="m">p2</text>
        <text transform="translate(551 390) rotate(-90)" class="m">cost</text>
        <text x="694" y="839" class="m">Iteration</text>
        <text transform="translate(544 679) rotate(-90)" class="m">Cost</text>
        <text x="1002" y="839" class="m">Iteration</text>
      </g>
      <g class="legend">
        <rect x="1039.500" y="573.500" width="64" height="37" fill="#fff" stroke="#222"/>
        <path d="M1047 583.500h40" stroke="#000080" fill="none"/>
        <path d="M1047 600.500h40" stroke="#d81e3c" fill="none"/>
        <text x="1091" y="588">P</text>
        <text x="1091" y="605">T</text>
      </g>
      <text class="azel" x="518" y="866" xml:space="preserve">Az:   19 El:   64</text>
    </svg>
  </div>
</div>
<script src="script.js"></script>
</body>
</html>
```
FILE: styles.css
```css
*{box-sizing:border-box}
html,body{margin:0;padding:0;height:1050px;overflow:hidden}
body{position:relative;background:#ececec;font-family:"Noto Sans","Noto Sans CJK SC",sans-serif;font-size:13px;color:#222}
i{display:block;font-style:normal}
.defs{position:absolute}
.fxglyph{font:italic bold 8px "Liberation Serif",serif;fill:#d2691e}
.pctglyph{font:bold 7px "Liberation Sans",sans-serif;fill:#e8f2e8}
.app{display:flex;flex-direction:column;height:1050px}

/* title */
.titlebar{height:23px;background:#fff;display:flex;align-items:center;flex:none}
.ic-title{width:14px;height:16px;margin-left:5px}
.title-text{margin-left:4px;font-size:13px;color:#7c7c7c}
.winctl{margin-left:auto;display:flex;gap:34px;margin-right:19px}
.wc{width:12px;height:12px}

/* tabs */
.tabstrip{height:29px;flex:none;display:flex;align-items:flex-end;padding-left:2px;gap:2px;background:linear-gradient(90deg,#0b365c 0,#0a3762 45%,#0f4478 70%,#1a5c9c 100%);position:relative}
.tab{height:26px;display:flex;align-items:center;justify-content:center;font-size:11px;color:#dfe8f0;border-radius:3px 3px 0 0;padding-bottom:3px}
.t-dark{background:linear-gradient(#0f4677,#124f86)}
.t-light{background:linear-gradient(#33659a,#44719f)}
.t-active{background:linear-gradient(#f1f1f1,#dedede);color:#333}
.t-home{width:91px}.t-plots{width:95px}.t-apps{width:89px}.t-editor{width:98px}.t-publish{width:104px}.t-view{width:88px}
.quick{margin-left:auto;height:24px;width:222px;margin-bottom:2px;background:#6b97c4;clip-path:polygon(5px 0,100% 0,100% 100%,5px 100%,0 50%);display:flex;align-items:center;padding-left:11px;gap:8px;margin-right:3px}
.qi{width:16px;height:16px}
.docsearch{width:192px;height:25px;margin-bottom:1px;background:#fff;display:flex;align-items:center;padding:0 3px 0 4px;font-size:12.300px;color:#5c5c5c;justify-content:space-between;letter-spacing:.1px}
.ds-ic{width:15px;height:15px}
.collapse{width:12px;height:13px;margin:0 1px 8px 12px}

/* ribbon */
.ribbon{height:93px;flex:none;display:flex;background:linear-gradient(#d7d7d7 0,#a9a9a9 100%);border-bottom:1px solid #e8e8e8;padding-left:2px;font-size:11px;color:#222}
.rsec{display:flex;flex-direction:column;border-right:1px solid #c4c4c4;box-shadow:1px 0 0 #b0b0b0 inset}
.r-file{width:216px}.r-nav{width:78px}.r-edit{width:161px}.r-break{width:73px}.r-run{width:244px}
.rbody{flex:1;display:flex;padding-top:2px}
.rlabel{height:19px;text-align:center;font-size:10px;color:#6f6f6f;background:linear-gradient(#b4b4b4,#a9a9a9);letter-spacing:.2px;line-height:20px}
.bigbtn{width:40px;display:flex;flex-direction:column;align-items:center;padding-top:6px}
.bigbtn span{margin-top:10px;line-height:15px;white-space:nowrap}
.bigbtn .caret{margin-top:6px}
.big{width:23px;height:23px;flex:none}
.wide{width:73px}
.caret{width:0;height:0;border:4px solid transparent;border-top:4px solid #222;border-bottom:0}
.smallcol{display:flex;flex-direction:column}
.r-file .smallcol{margin-left:7px;width:90px}
.r-nav .smallcol{margin-left:8px;width:70px}
.srow{height:24px;display:flex;align-items:center;white-space:nowrap}
.sic{width:17px;height:17px;flex:none}
.srow span{margin-left:3px}
.sic2{margin-left:6px}
.sc-cmp{margin-left:12px}.sc-prn{margin-left:9px}.sc-find{margin-left:13px}.sc2{margin-left:8px}.sc3{margin-left:12px}
.erow .elabel{width:60px;text-align:right;margin:0 8px 0 0}
.ei{margin-left:7px}
.fxbtn{font:italic bold 15px "Liberation Serif",serif;width:32px;text-align:center;color:#222;margin-left:-1px;margin-right:-2px}
.runrow{align-items:flex-start;padding-top:8px}
.ru1{width:19px;margin-left:14px}.ru2{width:24px;margin-left:26px}.ru3{width:23px;margin-left:17px}
.rsecbtn{display:flex;align-items:center;margin:9px 0 0 22px;white-space:nowrap}
.rsecbtn span{margin-left:4px}

/* path */
.pathbar{height:24px;flex:none;display:flex;align-items:center;background:#ececec;position:relative}
.p1{width:18px;height:16px;margin-left:4px}.p2{width:16px;height:15px;margin-left:3px}.p3,.p4{width:16px;height:16px}.p3{margin-left:10px}.p4{margin-left:6px}
.p5{width:15px;height:15px;margin-left:5px}
.pathbox{margin-left:7px;flex:1;height:22px;background:#fff;border:1px solid #d8d8d8;display:flex;align-items:center;font-size:12.500px}
.folderchip{width:12px;height:19px;background:linear-gradient(#fbe08c,#f0c860);margin-left:5px}
.crumbs{display:flex;align-items:center;margin-left:8px;color:#222}
.crumbs span{margin:0 9px 0 9px}
.crumbs span:nth-of-type(1){margin-right:6px}
.tri{width:0;height:0;border:4px solid transparent;border-left:5px solid #222;border-right:0}
.pdown{margin-left:auto;width:0;height:0;border:4px solid transparent;border-top:5px solid #222;border-bottom:0;margin-right:8px}

/* main */
.main{flex:1;display:grid;grid-template-columns:196px 1198px 267px;column-gap:7px;padding:1px 0 2px 2px;min-height:0}
.centercol{display:flex;flex-direction:column;gap:8px;margin-left:0;min-height:0;grid-column:2}
.main>.workspace{margin-left:1px}
.leftcol{display:flex;flex-direction:column;gap:2px;min-height:0}
.panel{background:#fff;border:1px solid #c4c4c4;display:flex;flex-direction:column;min-height:0;position:relative;overflow:hidden}
.phead{height:18px;flex:none;background:linear-gradient(#f9f9f9,#dfdfdf);display:flex;align-items:center;justify-content:space-between;padding:0 5px 2px 3px;font-size:12.500px;color:#666;white-space:nowrap}
.phead .dropc{margin-top:2px}
.chead{padding:0 5px 3px 5px}
.dropc{width:14px;height:14px;flex:none}
.folder{flex:1}
.details{height:191px;flex:none}
.fhead{height:24px;display:flex;align-items:center;border-bottom:1px solid #f0f0f0;font-size:12.500px}
.fh-ic{width:14px;height:16px;margin-left:20px}
.fh-name{margin-left:8px;padding-left:6px;border-left:1px solid #e4e4e4;line-height:24px}
.sortup{width:0;height:0;border:4px solid transparent;border-bottom:5px solid #aaa;border-top:0;margin-left:5px}
.frow{height:18px;display:flex;align-items:center;font-size:12.200px;color:#333;white-space:nowrap;flex:none}
.fic{width:15px;height:16px;margin-left:20px;flex:none}
.frow span{margin-left:3px}
.folder .fhead+.frow{margin-top:1px}
.sel{background:#b4b4b4}
.dhead{height:21px;flex:none;display:flex;align-items:center;justify-content:space-between;padding:0 8px 0 3px;font-size:12.200px;color:#333;border-bottom:1px solid #c4c4c4;background:#fafafa;white-space:nowrap}
.chev{width:13px;height:8px}
.dtext{margin:10px 0 7px 7px;font-size:12.500px;line-height:17px;color:#222;white-space:nowrap}
.dd{letter-spacing:1px}
.ditem{display:flex;align-items:center;height:19px;font-size:12.500px;white-space:nowrap;overflow:hidden}
.dic{width:15px;height:15px;margin-left:7px;flex:none}
.ditem span{margin-left:6px}

/* editor */
.editor{height:542px;flex:none}
.ehead{justify-content:flex-start;height:19px;padding:0 2px}
.ehead .dropc,.ehead .xic{margin-top:0}
.eic{width:16px;height:16px}
.ehead>span{margin-left:5px;letter-spacing:.1px}
.eright{margin-left:auto}
.xic{width:9px;height:9px;margin:0 6px 0 7px}
.etabs{height:22px;flex:none;background:#ebebeb;display:flex;align-items:flex-end;border-bottom:1px solid #9a9a9a;font-size:12px}
.grip{width:2px;height:13px;margin:0 11px 4px 4px;border-left:2px dotted #999}
.etab{height:21px;display:flex;align-items:center;padding-left:13px;color:#444;width:170px;white-space:nowrap}
.etab.on{background:#fff;border:1px solid #aaa;border-bottom:0;border-radius:3px 3px 0 0;color:#222;margin-right:1px;padding-left:11px}
.tabx{width:9px;height:9px;margin-left:auto;margin-right:6px}
.ebody{flex:1;display:flex;min-height:0}
.lines{flex:1;min-width:0;overflow:hidden}
.line{height:25px;display:flex;font:13.333px/25px "Liberation Mono","Noto Sans CJK SC",monospace;color:#333}
.ln{width:22px;text-align:right;background:#f0f0f0;flex:none;padding:2px 1px 0 0;color:#333;font-size:14px}
.dc{width:16px;background:#f6f6f6;flex:none;display:flex;align-items:center;padding-left:4px;border-left:1px solid #e2e2e2}
.dc i{width:9px;height:1px;background:#111}
.gp{width:33px;background:#fff;flex:none}
.code{flex:1;background:#fbfbdc;white-space:pre;overflow:hidden;padding:2px 0 0 1px}
.first .code{background:#fff;border-bottom:1px solid #aaa}
.cell{color:#228b22;font-weight:700}
.cj{font-family:"Noto Sans CJK SC",sans-serif;font-size:15.500px;letter-spacing:.5px;line-height:0}
.cell .cj{font-size:15.800px;letter-spacing:.9px}
.kw{color:#a020f0}
.cm{color:#228b22}
.vscroll{background:#efefef;display:flex;flex-direction:column;align-items:center;position:relative}
.es{width:16px;flex:none}
.es-top{width:17px;height:5px;background:#555;flex:none}
.chevs{width:10px;height:7px;margin:7px 0;flex:none}
.thumb{width:100%;height:96px;background:#c8c8c8;margin-top:0}
.botm{margin-top:auto}
.markstrip{width:16px;flex:none;background:#ececec;border-left:1px solid #c4c4c4;position:relative}
.okbox{width:12px;height:12px;margin:1px 0 0 2px;background:linear-gradient(135deg,#fbd9a8,#f3ae5c);border:1px solid #8f8f8f}
.mk{position:absolute;left:2px;width:11px;height:2px;background:#ee9b2c}
.m1{top:117px}.m2{top:121px}.m3{top:159px}.m4{top:186px}.m5{top:255px}.m6{top:309px}.m7{top:316px}.m8{top:322px}

/* command window */
.cmd{flex:1;min-height:0}
.cbody{flex:1;display:flex;min-height:0;position:relative}
.cgut{width:26px;flex:none;background:#f0f0f0;position:relative}
.fxprompt{position:absolute;left:7px;bottom:1px;font:italic bold 18px/24px "Liberation Serif",serif;color:#222}
.fxcaret{position:absolute;left:15px;bottom:3px;border:3px solid transparent;border-top:3px solid #222;border-bottom:0}
.cout{flex:1;display:flex;flex-direction:column;justify-content:flex-end;overflow:hidden;padding:0 0 0 4px;font:13.333px/25px "Liberation Mono",monospace;color:#333;white-space:pre}
.cl{height:25px;flex:none}
.cs{width:15px;flex:none;margin-right:0}
.cthumb{width:100%;flex:1;max-height:158px;margin-top:auto;background:#c8c8c8}

/* workspace */
.workspace{height:813px}
.whead{height:28px;flex:none;display:flex;align-items:center;background:#fff;font-size:12.500px;border-bottom:1px solid #f2f2f2;position:relative}
.wh-name{margin-left:5px}
.wh-val{position:absolute;left:128px;top:0;padding-left:7px;line-height:28px;border-left:1px solid #e4e4e4}
.wrows{flex:none}
.wr{height:17px;display:flex;align-items:center;font-size:12.200px;color:#333;white-space:nowrap}
.wi{width:15px;height:15px;flex:none;margin-left:1px}
.wn{width:115px;margin-left:3px;flex:none;font-size:12px}
.wv{flex:1}
.it{font-style:italic;color:#2e6d8e;font-size:11.900px}
.greenbar{position:absolute;right:0;top:325px;width:7px;height:57px;border-radius:3px;background:linear-gradient(#9c9c9c 0,#9c9c9c 42%,#2bd060 43%,#7fe49c 100%)}

/* status */
.statusbar{height:25px;flex:none;display:flex;align-items:stretch;background:#f0f0f0;font-size:12.500px;color:#333;position:relative}
.grip2{display:flex;gap:1px;width:30px;padding:6px 0 0 5px;border-right:1px solid #bbb;margin:1px 0 2px}
.grip2 i{width:2px;height:14px;background:#a8a8a8}
.grip2 b{width:0;height:0;border:3px solid transparent;border-bottom:4px solid #222;border-top:0;margin:5px 0 0 3px}
.stat{display:flex;align-items:center;background:#efefef;border:1px solid #c0c0c0;border-bottom:0;margin-top:0}
.s-script{margin-left:1257px;width:266px;padding-left:4px}
.s-pos{margin-left:2px;width:123px;padding-left:4px;gap:0}
.s-pos span:nth-child(1){width:25px}.s-pos span:nth-child(2){width:35px}.s-pos span:nth-child(3){width:32px}

/* taskbar */
.taskbar{height:40px;flex:none;background:#2c3a2f;display:flex;align-items:center;padding-left:1px;color:#f2f2f2}
.tb{width:49px;height:40px;display:flex;align-items:center;justify-content:center;flex:none;border-bottom:2px solid transparent}
.tb:nth-child(n+4){border-bottom-color:#7fa7c2}
.tb:nth-child(5){border-bottom-color:transparent}
.tactive{background:#46554c}
.ti{width:17px;height:17px}
.lg{width:23px;height:23px}
.tray{margin-left:auto;display:flex;align-items:center;height:40px;margin-right:25px}
.tr-up{width:12px;height:8px}
.tr-sp{width:16px;height:14px;margin-left:10px}
.tr-ime{margin-left:7px;font-size:16px;font-family:"Noto Sans CJK SC",sans-serif}
.tr-time{display:flex;flex-direction:column;align-items:center;margin-left:0;width:76px;font-size:12.500px;line-height:19px}
.tr-note{width:16px;height:16px;margin-left:13px}

/* figure window */
.figure{position:absolute;left:489px;top:90px;width:700px;height:786px;background:#f0f0f0;border:1px solid #6e6e6e;box-shadow:8px 4px 22px rgba(60,60,60,.42);display:flex;flex-direction:column}
.fig-title{height:29px;flex:none;background:#fff;display:flex;align-items:center;padding-left:9px;font-size:13px;color:#333}
.fig-logo{width:16px;height:16px}
.fig-name{margin-left:3px}
.fig-ctl{margin-left:auto;display:flex;gap:35px;margin-right:17px}
.fc{width:11px;height:11px}
.fig-menu{height:27px;flex:none;background:#fff;display:flex;align-items:center;padding:1px 0 0 7px;gap:16.300px;font-size:12.300px;color:#222;border-bottom:2px solid #bdbdbd;position:relative}
.fig-dock{position:absolute;right:4px;top:12px;width:7px;height:7px}
.fig-tools{height:27px;flex:none;background:#f0f0f0;display:flex;align-items:center;border-bottom:1px solid #ababab;padding-left:3px;gap:5px}
.ft{width:17px;height:17px;flex:none}
.ft-on{background:#b6d3ea;border:1px solid #8fb4d4;height:23px;width:21px;display:flex;align-items:center;justify-content:center}
.sep{width:1px;height:20px;background:#c8c8c8;margin:0 3px}
.sep.tight{margin:0 1px}
.ftc{border-width:3px;border-top-width:3px;margin-left:3px;margin-right:-5px}
.fig-plots{flex:1;position:relative;background:#ededed;min-height:0}
.plots-canvas{position:absolute;left:0;top:0}
.plots-text{position:absolute;left:0;top:0;width:698px;height:702px}
.plots-text text{font-family:"Liberation Sans",sans-serif}
.tick{font-size:12.500px;fill:#404040}
.alabel{font-size:14px;fill:#333}
.legend{font-size:13px;fill:#111}
.azel{font-size:11px;fill:#111;white-space:pre}
.e{text-anchor:end}
.m{text-anchor:middle}
```
FILE: script.js
```js
(function () {
  var c = document.getElementById('plots');
  if (!c || !c.getContext) return;
  var g = c.getContext('2d');
  var OX = 490, OY = 174;
  g.translate(-OX, -OY);

  function jet(v) {
    v = Math.max(0, Math.min(1, v));
    var r = Math.min(4 * v - 1.5, -4 * v + 4.5);
    var gr = Math.min(4 * v - 0.5, -4 * v + 3.5);
    var b = Math.min(4 * v + 0.5, -4 * v + 2.5);
    function q(t) { return Math.round(255 * Math.max(0, Math.min(1, t))); }
    return [q(r), q(gr), q(b)];
  }
  function css(a) { return 'rgb(' + a[0] + ',' + a[1] + ',' + a[2] + ')'; }

  function f(x, y) {
    var r2 = x * x + y * y;
    var base = 0.9 - 0.55 * r2 + 0.1 * r2 * r2 - 0.15 * x * x * y * y;
    var bump = 0.038 * (Math.cos(21 * x) + Math.cos(21 * y));
    var ax = Math.abs(x) - 0.92, ay = Math.abs(y) - 0.92;
    var corner = 0.15 * Math.exp(-(ax * ax + ay * ay) / 0.02);
    return Math.max(0, Math.min(1, base + bump - corner));
  }

  var P3 = function (x, y, v) {
    return [694.5 + 85.5 * x + 28 * y, 380.5 + 22 * x - 64.5 * y - 67 * v];
  };

  var path = [[16,-10],[16,-11],[16,-12],[17,-12],[18,-12],[18,-13],[18,-12],[19,-12],[19,-11],[20,-11],[20,-12],[20,-11],[20,-10],[20,-9],[19,-9],[20,-9],[20,-8],[20,-7],[19,-7],[19,-6],[19,-5],[19,-4],[19,-3],[19,-2],[18,-2],[18,-3],[18,-4],[19,-4],[18,-4],[18,-5],[17,-5],[17,-6],[17,-7],[17,-6],[16,-6],[16,-7],[16,-6],[15,-6],[15,-7],[15,-6],[15,-5],[14,-5],[13,-5],[13,-6],[12,-6],[12,-5],[12,-4],[13,-4],[14,-4],[14,-3],[14,-2],[15,-2],[15,-3],[15,-4],[15,-1],[14,-1],[14,0],[13,0],[13,1],[14,1],[14,0],[13,0],[13,-1],[12,-1],[12,-2],[11,-2],[10,-2],[9,-2],[9,-3],[10,-3],[11,-3],[11,-2],[12,-2],[12,-1],[11,-1],[10,-1],[10,-2],[9,-2],[8,-2],[8,-3],[7,-3],[7,-4],[8,-4],[8,-5],[9,-5],[9,-6],[8,-6],[7,-6],[7,-5],[6,-5],[6,-4],[5,-4],[5,-3],[6,-3],[7,-3],[7,-2],[6,-2],[6,-1],[5,-1],[5,0],[6,0],[6,1],[7,1],[7,-1],[8,-1],[8,1],[9,1],[9,2],[9,1],[9,0],[8,0],[7,0],[6,0],[5,0],[4,0],[3,0],[2,0],[1,0],[0,0]];

  function diamond(x, y, w, h) {
    g.fillStyle = '#000';
    g.beginPath();
    g.moveTo(x, y - h); g.lineTo(x + w, y); g.lineTo(x, y + h); g.lineTo(x - w, y);
    g.closePath(); g.fill();
  }
  function ticks(list) {
    g.strokeStyle = '#262626'; g.lineWidth = 1; g.beginPath();
    list.forEach(function (l) { g.moveTo(l[0], l[1]); g.lineTo(l[2], l[3]); });
    g.stroke();
  }

  /* ---------- 3-D surface ---------- */
  (function () {
    g.fillStyle = '#fff';
    g.beginPath();
    [[581,356],[637,228],[808,271],[808,338],[752,467],[581,423]].forEach(function (p, i) { i ? g.lineTo(p[0], p[1]) : g.moveTo(p[0], p[1]); });
    g.closePath(); g.fill();

    g.strokeStyle = '#dcdcdc'; g.lineWidth = 1; g.beginPath();
    [-0.5, 0, 0.5].forEach(function (t) {
      var a = P3(t, 1, 1), b = P3(t, 1, 0); g.moveTo(a[0], a[1]); g.lineTo(b[0], b[1]);
      a = P3(-1, t, 1); b = P3(-1, t, 0); g.moveTo(a[0], a[1]); g.lineTo(b[0], b[1]);
      a = P3(t, -1, 0); b = P3(t, 1, 0); g.moveTo(a[0], a[1]); g.lineTo(b[0], b[1]);
      a = P3(-1, t, 0); b = P3(1, t, 0); g.moveTo(a[0], a[1]); g.lineTo(b[0], b[1]);
    });
    var a = P3(-1, -1, 0.5), b = P3(-1, 1, 0.5), d = P3(1, 1, 0.5);
    g.moveTo(a[0], a[1]); g.lineTo(b[0], b[1]); g.lineTo(d[0], d[1]);
    g.stroke();

    var n = 60, s = 2 / n;
    g.lineWidth = 1;
    for (var lv = 0.1; lv < 0.95; lv += 0.1) {
      g.strokeStyle = css(jet(lv)); g.beginPath();
      for (var j = 0; j < n; j++) for (var i = 0; i < n; i++) {
        var x0 = -1 + i * s, y0 = -1 + j * s, x1 = x0 + s, y1 = y0 + s;
        var c0 = f(x0, y0), c1 = f(x1, y0), c2 = f(x1, y1), c3 = f(x0, y1), pts = [];
        if ((c0 - lv) * (c1 - lv) < 0) pts.push([x0 + s * (lv - c0) / (c1 - c0), y0]);
        if ((c1 - lv) * (c2 - lv) < 0) pts.push([x1, y0 + s * (lv - c1) / (c2 - c1)]);
        if ((c3 - lv) * (c2 - lv) < 0) pts.push([x0 + s * (lv - c3) / (c2 - c3), y1]);
        if ((c0 - lv) * (c3 - lv) < 0) pts.push([x0, y0 + s * (lv - c0) / (c3 - c0)]);
        if (pts.length >= 2) {
          var p = P3(pts[0][0], pts[0][1], 0), q = P3(pts[1][0], pts[1][1], 0);
          g.moveTo(p[0], p[1]); g.lineTo(q[0], q[1]);
        }
      }
      g.stroke();
    }

    g.strokeStyle = '#262626'; g.lineWidth = 1; g.beginPath();
    g.moveTo(581, 356); g.lineTo(637, 228); g.lineTo(808, 271); g.lineTo(808, 338);
    g.moveTo(637, 228); g.lineTo(637, 296);
    g.stroke();

    var N = 110, st = 2 / N;
    for (var jj = N - 1; jj >= 0; jj--) for (var ii = 0; ii < N; ii++) {
      var xa = -1 + ii * st, ya = -1 + jj * st, xb = xa + st, yb = ya + st;
      var va = f(xa, ya), vb = f(xb, ya), vc = f(xb, yb), vd = f(xa, yb);
      var A = P3(xa, ya, va), B = P3(xb, ya, vb), C = P3(xb, yb, vc), D = P3(xa, yb, vd);
      var v = (va + vb + vc + vd) / 4;
      var col = jet(v);
      var slope = ((vb + vc - va - vd) * 0.6 + (vc + vd - va - vb) * 0.9) / (2 * st);
      var k = Math.max(0.82, Math.min(1.08, 1 + 0.09 * slope));
      var str = 'rgb(' + Math.min(255, Math.round(col[0] * k)) + ',' + Math.min(255, Math.round(col[1] * k)) + ',' + Math.min(255, Math.round(col[2] * k)) + ')';
      g.fillStyle = str; g.strokeStyle = str; g.lineWidth = 0.6;
      g.beginPath(); g.moveTo(A[0], A[1]); g.lineTo(B[0], B[1]); g.lineTo(C[0], C[1]); g.lineTo(D[0], D[1]); g.closePath();
      g.fill(); g.stroke();
    }

    g.strokeStyle = '#262626'; g.lineWidth = 1; g.beginPath();
    g.moveTo(581, 356); g.lineTo(581, 423); g.lineTo(752, 467); g.lineTo(808, 338);
    g.stroke();
    var tl = [[581, 356, 576, 356], [581, 389.5, 576, 389.5], [581, 423, 576, 423]];
    [-1, -0.5, 0, 0.5, 1].forEach(function (t) {
      var p = P3(t, -1, 0); tl.push([p[0], p[1], p[0] - 1, p[1] + 3]);
      p = P3(1, t, 0); tl.push([p[0], p[1], p[0] + 3, p[1] + 1]);
    });
    ticks(tl);

    g.strokeStyle = '#000'; g.lineWidth = 1.2; g.lineJoin = 'round'; g.beginPath();
    var pts3 = path.map(function (q) { var x = q[0] * 0.05, y = q[1] * 0.05; return P3(x, y, f(x, y)); });
    pts3.forEach(function (p, i) { i ? g.lineTo(p[0], p[1]) : g.moveTo(p[0], p[1]); });
    g.stroke();
    g.fillStyle = '#000';
    pts3.forEach(function (p) { g.fillRect(p[0] - 1.5, p[1] - 1.5, 3, 3); });
    diamond(pts3[0][0], pts3[0][1], 5, 6);
    var end = pts3[pts3.length - 1];
    diamond(end[0], end[1], 6, 8.5);

    g.save(); g.setLineDash([1.5, 1.5]); g.strokeStyle = '#111'; g.lineWidth = 1;
    g.beginPath(); g.arc(601, 373, 5.5, 0, Math.PI * 2); g.stroke();
    g.restore();
    g.fillStyle = '#111';
    g.beginPath(); g.moveTo(596, 367); g.lineTo(600, 368); g.lineTo(597, 371); g.closePath(); g.fill();
  })();

  /* ---------- heat map ---------- */
  (function () {
    var x0 = 888, y0 = 228, w = 229, h = 239;
    var img = g.createImageData(w, h);
    for (var j = 0; j < h; j++) for (var i = 0; i < w; i++) {
      var x = -1 + 2 * (i + 0.5) / w, y = 1 - 2 * (j + 0.5) / h;
      var col = jet(f(x, y)), o = (j * w + i) * 4;
      img.data[o] = col[0]; img.data[o + 1] = col[1]; img.data[o + 2] = col[2]; img.data[o + 3] = 255;
    }
    g.putImageData(img, x0 - OX, y0 - OY);
    function M(q) { return [888 + (q[0] * 0.05 + 1) * 114.5, 347.5 - q[1] * 0.05 * 119.5]; }
    var pts = path.map(M);
    g.strokeStyle = '#000'; g.lineWidth = 1.5; g.lineJoin = 'miter'; g.beginPath();
    pts.forEach(function (p, i) { i ? g.lineTo(p[0], p[1]) : g.moveTo(p[0], p[1]); });
    g.stroke();
    g.fillStyle = '#000';
    pts.forEach(function (p) { g.fillRect(p[0] - 1.5, p[1] - 1.5, 3, 3); });
    diamond(pts[0][0], pts[0][1], 6, 8);
    diamond(pts[pts.length - 1][0], pts[pts.length - 1][1], 6, 8);
  })();

  function axesBox(x0, y0, x1, y1, xt, yt) {
    g.strokeStyle = '#262626'; g.lineWidth = 1;
    g.strokeRect(x0 + 0.5, y0 + 0.5, x1 - x0, y1 - y0);
    var l = [];
    xt.forEach(function (x) { l.push([x, y1, x, y1 - 3], [x, y0, x, y0 + 3]); });
    yt.forEach(function (y) { l.push([x0, y, x0 + 3, y], [x1, y, x1 - 3, y]); });
    ticks(l);
  }
  var seed = 7;
  function rnd() { seed = (seed * 16807) % 2147483647; return seed / 2147483647; }

  /* ---------- cost curve ---------- */
  (function () {
    var x0 = 581, y0 = 560, x1 = 808, y1 = 798;
    g.fillStyle = '#fff'; g.fillRect(x0, y0, x1 - x0, y1 - y0);
    axesBox(x0, y0, x1, y1, [626.4, 671.8, 717.2, 762.6], [639, 719]);
    var d = [[0,-1.27],[5,-1.36],[12,-1.38],[20,-1.46],[24,-1.44],[30,-1.2],[35,-1.13],[40,-1.06],[45,-1.16],[50,-1.12],[55,-1.16],[60,-1.08],[62,-1.16],[65,-.93],[70,-.93],[72,-1.08],[77,-.95],[80,-.75],[85,-.62],[88,-.82],[90,-.62],[95,-.8],[100,-.55],[105,-.68],[108,-.35],[112,-.33],[115,-.24],[118,-.4],[122,-.27],[125,-.58],[130,-.42],[133,-.6],[137,-.45],[140,-.55],[145,-.42],[150,-.55],[152,-.88],[158,-.65],[165,-.47],[170,-.43],[175,-.55],[178,-.43],[182,-.55],[188,-.43],[195,-.46],[205,-.47],[208,-.36],[215,-.5],[220,-.3],[225,-.13],[230,-.17],[235,-.26],[238,-.11],[240,-.17],[245,-.12],[250,-.18],[255,-.32],[258,-.11],[262,-.2],[268,-.11],[272,-.18],[280,-.26],[285,-.13],[295,-.13],[300,-.16],[305,-.11],[312,-.15],[320,-.11],[328,-.16],[335,-.1],[342,-.15],[350,-.21],[358,-.13],[365,-.05],[370,0]];
    for (var i = 374; i <= 450; i += 4) d.push([i, rnd() > 0.5 ? 0 : -0.045]);
    d.push([455, 0], [1000, 0]);
    g.strokeStyle = '#136fb8'; g.lineWidth = 1.2; g.lineJoin = 'miter'; g.beginPath();
    d.forEach(function (p, i) {
      var X = x0 + p[0] / 1000 * (x1 - x0), Y = y0 + 0.5 + p[1] / -1.5 * (y1 - y0);
      i ? g.lineTo(X, Y) : g.moveTo(X, Y);
    });
    g.stroke();
  })();

  /* ---------- P and T ---------- */
  (function () {
    var x0 = 888, y0 = 560, x1 = 1117, y1 = 798, W = x1 - x0, H = y1 - y0;
    g.fillStyle = '#fff'; g.fillRect(x0, y0, W, H);
    var E = [[0,1],[20,.96],[60,.93],[90,.88],[110,.86],[140,.8],[160,.78],[190,.72],[210,.68],[230,.65],[250,.6],[270,.52],[290,.46],[320,.4],[340,.28],[360,.22],[380,.15],[400,.09],[420,.05],[450,.015],[480,.003],[600,0],[1000,0]];
    function env(t) {
      for (var i = 1; i < E.length; i++) if (t <= E[i][0]) {
        var a = E[i - 1], b = E[i];
        return a[1] + (b[1] - a[1]) * (t - a[0]) / (b[0] - a[0]);
      }
      return 0;
    }
    g.fillStyle = '#0000f0';
    for (var px = 0; px < W; px++) {
      var it = px / W * 1000, e = env(it);
      var jag = it > 60 && it < 340 ? (rnd() - 0.5) * 0.06 : 0;
      var h = Math.max(0, e + jag) * H;
      g.fillRect(x0 + px, y1 - h, 1, h);
    }
    g.fillStyle = '#3030f0';
    [[38,1],[50,1],[60,1],[89,1],[114,.98],[145,.98],[165,1],[173,1],[184,1],[198,.92],[213,.9],[239,.82],[257,.8],[275,.75],[308,.68],[314,.66],[325,.62],[337,.57]].forEach(function (s) {
      g.fillRect(x0 + s[0] / 1000 * W, y1 - s[1] * H, 1, s[1] * H);
    });
    g.fillStyle = 'rgba(255,255,255,.72)';
    [[92,.24],[145,.53],[148,.5],[180,.08],[216,.4],[245,.1],[257,.12],[283,.3],[297,.15],[320,.27],[337,.2],[351,.2],[370,.16],[388,.14],[402,.1],[420,.06]].forEach(function (s) {
      g.fillRect(x0 + s[0] / 1000 * W, y1 - s[1] * H, 1, s[1] * H);
    });
    g.fillStyle = 'rgba(255,255,255,.5)';
    for (var q = 0; q < W; q += 2) {
      var t2 = q / W * 1000;
      if (t2 > 120 && t2 < 430 && rnd() < 0.16) {
        var top = (0.03 + rnd() * 0.12) * H;
        g.fillRect(x0 + q, y1 - top, 1, top);
      }
    }
    axesBox(x0, y0, x1, y1, [933.8, 979.6, 1025.4, 1071.2], [607.6, 655.2, 702.8, 750.4]);
    g.strokeStyle = '#0000f0'; g.lineWidth = 1; g.beginPath(); g.moveTo(x0, y1); g.lineTo(x0 + W * 0.62, y1); g.stroke();
    g.strokeStyle = '#d81e3c'; g.lineWidth = 1.1; g.beginPath();
    for (var t = 0; t <= 1000; t += 4) {
      var X = x0 + t / 1000 * W, Y = y1 - Math.pow(0.99, t) * H;
      t ? g.lineTo(X, Y) : g.moveTo(X, Y);
    }
    g.stroke();
  })();
})();
```
